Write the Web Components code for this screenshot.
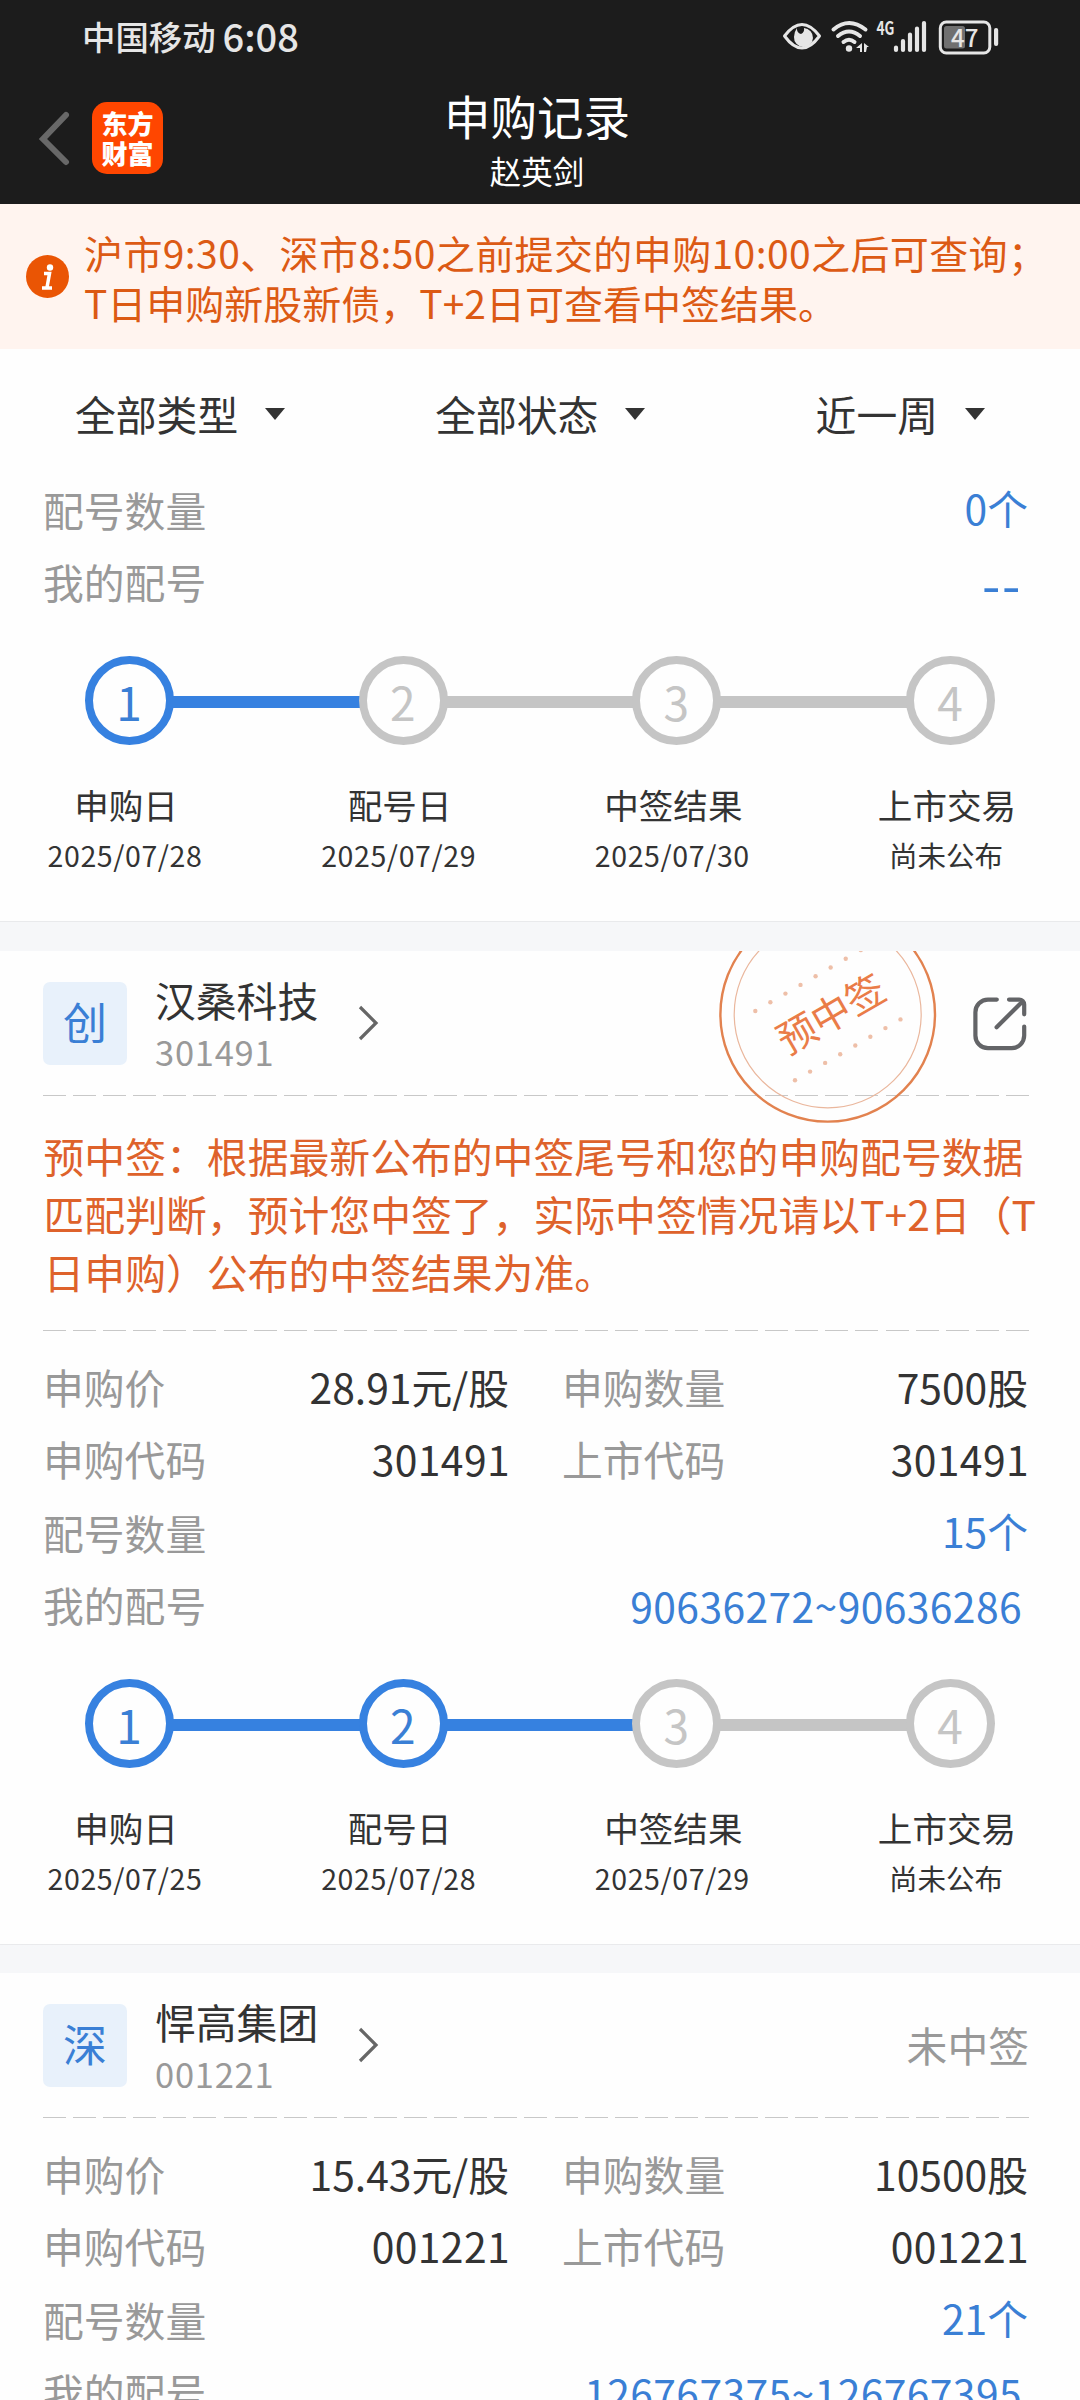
<!DOCTYPE html>
<html lang="zh-CN">
<head>
<meta charset="utf-8">
<title>申购记录</title>
<style>
	html, body {
		margin: 0;
		padding: 0;
	}
	body {
		width: 1080px;
		height: 2400px;
		overflow: hidden;
		background: #fefefe;
		color: #333;
		font-family: "Noto Sans CJK SC", sans-serif;
		font-size: 40.8px;
		line-height: 1;
	}
	.loose {
		letter-spacing: 0.4px;
	}
</style>
</head>
<body>
<status-bar carrier="中国移动" time="6:08" battery="47"></status-bar>
<nav-bar><span slot="title">申购记录</span><span slot="subtitle">赵英剑</span></nav-bar>
<notice-bar><span class="loose">沪市9:30、深市8:50之前提交的申购10:00之后可查询；</span><br>T日申购新股新债，T+2日可查看中签结果。</notice-bar>
<filter-bar>
	<filter-item>全部类型</filter-item>
	<filter-item>全部状态</filter-item>
	<filter-item style="margin-left: auto">近一周</filter-item>
</filter-bar>

<ipo-card>
	<data-row slot="wide" label="配号数量" link>0个</data-row>
	<data-row slot="wide" label="我的配号" link empty>--</data-row>
	<step-progress slot="steps" current="1" dates="2025/07/28,2025/07/29,2025/07/30,尚未公布"></step-progress>
</ipo-card>
<section-gap></section-gap>

<ipo-card>
	<stock-header slot="header" market="创" name="汉桑科技" code="301491">
		<result-stamp>预中签</result-stamp>
		<share-icon></share-icon>
	</stock-header>
	<stock-tip slot="header">预中签：根据最新公布的中签尾号和您的申购配号数据<br>匹配判断，预计您中签了，实际中签情况请以T+2日（T<br>日申购）公布的中签结果为准。</stock-tip>
	<data-row label="申购价">28.91元/股</data-row>
	<data-row label="申购数量">7500股</data-row>
	<data-row label="申购代码" number>301491</data-row>
	<data-row label="上市代码" number>301491</data-row>
	<data-row slot="wide" label="配号数量" link>15个</data-row>
	<data-row slot="wide" label="我的配号" link number>90636272~90636286</data-row>
	<step-progress slot="steps" current="2" dates="2025/07/25,2025/07/28,2025/07/29,尚未公布"></step-progress>
</ipo-card>
<section-gap style="height: 29px"></section-gap>

<ipo-card>
	<stock-header slot="header" market="深" name="悍高集团" code="001221">未中签</stock-header>
	<data-row label="申购价">15.43元/股</data-row>
	<data-row label="申购数量">10500股</data-row>
	<data-row label="申购代码" number>001221</data-row>
	<data-row label="上市代码" number>001221</data-row>
	<data-row slot="wide" label="配号数量" link>21个</data-row>
	<data-row slot="wide" label="我的配号" link number>126767375~126767395</data-row>
</ipo-card>

<script>
// 33 dashes of 23px over the 986px content width
const dashedLine = `
	.dashed {
		height: 1px;
		margin: 0 51px 0 43px;
		background: repeating-linear-gradient(90deg, #c8c8c8 0 23px, transparent 23px 30.09px);
	}
`

class BaseElement extends HTMLElement {
	constructor() {
		super()
		this._shadowRoot = this.attachShadow({ mode: 'open' })
	}
	connectedCallback() {
		this._shadowRoot.innerHTML = this.template()
	}
}

class StatusBar extends BaseElement {
	template() {
		return `
			<style>
				:host {
					display: flex;
					align-items: center;
					box-sizing: border-box;
					height: 72px;
					padding: 0 80px 0 82px;
					background: #1c1c1c;
					color: #e6e6e6;
				}
				.carrier {
					font-size: 33.4px;
					font-weight: 500;
				}
				.time {
					margin-left: 7px;
					font-size: 38px;
					font-weight: 500;
				}
				svg {
					display: block;
					margin-left: auto;
				}
			</style>
			<span class="carrier">${this.getAttribute('carrier')}</span>
			<span class="time">${this.getAttribute('time')}</span>
			<svg width="220" height="72" viewBox="780 0 220 72" fill="none" stroke="#e6e6e6" stroke-linecap="round">
				<path d="M784.5 36Q802 13 819.500 36Q802 60 784.500 36Z" stroke-width="3" stroke-linejoin="round"/>
				<path d="M797 28a5.500 5.500 0 0 0 4 6a5.500 5.500 0 0 0 3-6a9.500 9.500 0 1 1-10 9q0-5 3-9z" fill="#e6e6e6" stroke="none"/>
				<path d="M833.500 29.500q15.500-13 32 0M838 36q11-9 22 0M843.500 42q5.500-4.500 11 0" stroke-width="4"/>
				<circle cx="849" cy="48.500" r="3.200" fill="#e6e6e6" stroke="none"/>
				<path d="M856 48l6-5v9h-2v-4zM864 43l5 4h-2l-1 5h-2z" fill="#e6e6e6" stroke="none"/>
				<text x="876.500" y="34.500" font-size="18.500" font-weight="700" fill="#e6e6e6" stroke="none" textLength="18" lengthAdjust="spacingAndGlyphs">4G</text>
				<path d="M896 47.500v2.500M903 41v9M910 34.500v15.500M917 28.500v21.500M924 23v27" stroke-width="4.200"/>
				<rect x="940.300" y="22" width="49.500" height="31" rx="6" stroke-width="3"/>
				<rect x="944" y="26" width="21" height="22.500" rx="2.500" fill="#707070" stroke="none"/>
				<rect x="994" y="28" width="4.200" height="18" rx="2" fill="#e6e6e6" stroke="none"/>
				<text x="951" y="46.500" font-size="24" font-weight="500" fill="#e6e6e6" stroke="none">${this.getAttribute('battery')}</text>
			</svg>
		`
	}
}

class NavBar extends BaseElement {
	template() {
		return `
			<style>
				:host {
					display: grid;
					grid-template-columns: 1fr auto 1fr;
					height: 132px;
					padding-right: 6px;
					background: #1c1c1c;
					color: #fff;
				}
				.left {
					display: flex;
					align-items: center;
					height: 132px;
					padding: 0 0 0 38px;
				}
				.logo {
					display: grid;
					place-content: center;
					width: 71px;
					height: 72px;
					margin: 0 0 0 21px;
					border-radius: 15px;
					background: #ff4600;
					font-size: 26px;
					font-weight: 900;
					line-height: 30px;
					text-align: center;
				}
				.titles {
					display: flex;
					flex-direction: column;
					align-items: center;
					padding-top: 15px;
				}
				.title {
					font-size: 46.500px;
					line-height: 56px;
				}
				.subtitle {
					font-size: 31.500px;
					line-height: 54px;
				}
			</style>
			<div class="left">
				<svg width="33" height="56" viewBox="0 0 33 56"><path d="M28 5L5 29L28 52" fill="none" stroke="#686868" stroke-width="6" stroke-linecap="round" stroke-linejoin="miter"/></svg>
				<div class="logo">东方<br>财富</div>
			</div>
			<div class="titles">
				<div class="title"><slot name="title"></slot></div>
				<div class="subtitle"><slot name="subtitle"></slot></div>
			</div>
		`
	}
}

class NoticeBar extends BaseElement {
	template() {
		return `
			<style>
				:host {
					display: flex;
					align-items: center;
					box-sizing: border-box;
					height: 145px;
					padding: 0 0 0 26px;
					background: #fff4ef;
					color: #dc5a14;
					font-size: 39px;
					line-height: 50px;
					white-space: nowrap;
				}
				svg {
					flex: none;
					margin-right: 15px;
				}
			</style>
			<svg width="43" height="43" viewBox="0 0 43 43">
				<circle cx="21.500" cy="21.500" r="21.500" fill="#ea5504"/>
				<circle cx="24" cy="12.500" r="3.200" fill="#fff"/>
				<path d="M18 18.500h5.500l-2.500 14M16 33h10" fill="none" stroke="#fff" stroke-width="3.500"/>
			</svg>
			<div class="text"><slot></slot></div>
		`
	}
}

class FilterBar extends BaseElement {
	template() {
		return `
			<style>
				:host {
					display: flex;
					gap: 150px;
					box-sizing: border-box;
					height: 125px;
					padding: 35px 95px 0 75px;
				}
			</style>
			<slot></slot>
		`
	}
}

class FilterItem extends BaseElement {
	template() {
		return `
			<style>
				:host {
					display: flex;
					align-items: center;
					height: 60px;
				}
				.arrow {
					margin: 0 0 1px 27px;
					border: 10px solid transparent;
					border-top: 12px solid #333;
					border-bottom: 0;
				}
			</style>
			<slot></slot>
			<span class="arrow"></span>
		`
	}
}

class IpoCard extends BaseElement {
	template() {
		return `
			<style>
				:host {
					display: block;
				}
				.pairs {
					display: grid;
					grid-template-columns: 1fr 1fr;
					column-gap: 52px;
					margin: 0 51px 2px 43px;
				}
				.pairs.has-header {
					padding-top: 20px;
				}
				.pairs.empty {
					display: none;
				}
				.wide {
					margin: 0 51px 0 43px;
				}
			</style>
			<slot name="header"></slot>
			<div class="pairs ${this.querySelector('data-row:not([slot])') ? 'has-header' : 'empty'}"><slot></slot></div>
			<div class="wide"><slot name="wide"></slot></div>
			<slot name="steps"></slot>
		`
	}
}

class StockHeader extends BaseElement {
	template() {
		return `
			<style>
				${dashedLine}
				:host {
					display: block;
				}
				.bar {
					position: relative;
					display: flex;
					align-items: center;
					box-sizing: border-box;
					height: 144px;
					padding: 0 51px 0 43px;
				}
				.market {
					flex: none;
					width: 84px;
					height: 83px;
					border-radius: 7px;
					background: #e8f1fb;
					color: #3a7fd5;
					font-size: 44px;
					line-height: 79px;
					text-align: center;
				}
				.info {
					margin-left: 28px;
					padding-top: 5px;
				}
				.name {
					line-height: 52px;
				}
				.code {
					color: #999;
					font-size: 34.500px;
					line-height: 51px;
					letter-spacing: 0.75px;
				}
				.chevron {
					margin: 0 0 0 38px;
				}
				.result {
					display: flex;
					margin: 1px 0 0 auto;
					color: #999;
				}
			</style>
			<div class="bar">
				<div class="market">${this.getAttribute('market')}</div>
				<div class="info">
					<div class="name">${this.getAttribute('name')}</div>
					<div class="code">${this.getAttribute('code')}</div>
				</div>
				<svg class="chevron" width="24" height="36" viewBox="0 0 24 36"><path d="M4 2L20 18L4 34" fill="none" stroke="#666" stroke-width="3.200"/></svg>
				<div class="result"><slot></slot></div>
			</div>
			<div class="dashed"></div>
		`
	}
}

class StockTip extends BaseElement {
	template() {
		return `
			<style>
				${dashedLine}
				:host {
					display: block;
				}
				.text {
					padding: 31px 0 29px 43.500px;
					color: #de622b;
					font-size: 40.850px;
					line-height: 58px;
					white-space: nowrap;
				}
			</style>
			<div class="text"><slot></slot></div>
			<div class="dashed"></div>
		`
	}
}

class ResultStamp extends BaseElement {
	dots(x, y) {
		return Array.from({ length: 8 }, (_, i) =>
			`<circle cx="${x + i * 15.07}" cy="${y - i * 8.7}" r="2.200"/>`).join('')
	}
	template() {
		// overlaps the divider below, cut off by the top of the card
		return `
			<style>
				:host {
					position: absolute;
					left: 717px;
					top: 0;
					width: 222px;
					height: 174px;
				}
				svg {
					display: block;
				}
			</style>
			<svg width="222" height="174" viewBox="0 0 222 174">
				<circle cx="110.700" cy="63.300" r="107.300" fill="none" stroke="#e2824f" stroke-width="2.400"/>
				<circle cx="110.700" cy="63.300" r="93.500" fill="none" stroke="#eab79d" stroke-width="1.200"/>
				<g fill="#eebfa8">${this.dots(38.300, 60)}${this.dots(78, 129.300)}</g>
				<text transform="translate(114 63) rotate(-30)" y="14.500" text-anchor="middle" font-size="39" fill="#ea7c48">${this.textContent}</text>
			</svg>
		`
	}
}

class ShareIcon extends BaseElement {
	template() {
		return `
			<style>
				:host {
					display: block;
					height: 54px;
					margin-right: 2px;
				}
				svg {
					display: block;
				}
			</style>
			<svg width="54" height="54" viewBox="0 0 54 54" fill="none" stroke="#636467" stroke-width="4.200" stroke-linecap="round" stroke-linejoin="round">
				<path d="M23.800 2.600H15A12.600 12.600 0 0 0 2.400 15.200V38.500A12.600 12.600 0 0 0 15 51.200H38.500A12.600 12.600 0 0 0 51.200 38.500V29.500"/>
				<path d="M36 2.600H46.200A5 5 0 0 1 51.200 7.600V17.300M49.500 4.500L23.600 30.200"/>
			</svg>
		`
	}
}

class DataRow extends BaseElement {
	template() {
		return `
			<style>
				:host {
					display: flex;
					justify-content: space-between;
					height: 72px;
					line-height: 72px;
				}
				.label {
					color: #999;
				}
				.value {
					padding-right: 1px;
				}
				:host([link]) .value {
					color: #3a7fd5;
					line-height: 68px;
				}
				:host([number]) .value {
					padding-right: 0;
					letter-spacing: 0.4px;
				}
				:host([link][number]) .value {
					padding-right: 7px;
					line-height: 73px;
				}
				:host([empty]) .value {
					padding-right: 7px;
					font-size: 53px;
					letter-spacing: 1.600px;
					line-height: 72px;
				}
			</style>
			<span class="label">${this.getAttribute('label')}</span>
			<span class="value"><slot></slot></span>
		`
	}
}

class StepProgress extends BaseElement {
	template() {
		const current = Number(this.getAttribute('current'))
		const dates = this.getAttribute('dates').split(',')
		const names = ['申购日', '配号日', '中签结果', '上市交易']
		const htmlArr = []
		names.forEach((name, i) => {
			if (i > 0) {
				htmlArr.push(`<span class="line ${i <= current ? 'on' : ''}"></span>`)
			}
			htmlArr.push(`<span class="dot ${i < current ? 'on' : ''}">${i + 1}</span>`)
		})
		return `
			<style>
				:host {
					display: block;
					padding: 38px 0 42px;
				}
				.track {
					display: flex;
					align-items: center;
					margin: 0 85px;
				}
				.dot {
					flex: none;
					box-sizing: border-box;
					width: 89px;
					height: 89px;
					padding-right: 1px;
					border: 8.500px solid #c5c5c5;
					border-radius: 50%;
					color: #c5c5c5;
					font-size: 46px;
					line-height: 75px;
					text-align: center;
				}
				.line {
					flex: 1;
					height: 12px;
					margin: 3px -1px 0;
					background: #c5c5c5;
				}
				.line.on {
					background: #3681e0;
				}
				.dot.on {
					border-color: #3681e0;
					color: #3a7fd5;
				}
				.names {
					display: flex;
					justify-content: space-between;
					margin: 34px 43px 0 36px;
				}
				.item {
					width: 180px;
					font-size: 34.600px;
					line-height: 50px;
					text-align: center;
				}
				.date {
					padding: 1px 2px 0 0;
					margin-bottom: -1px;
					font-size: 28.500px;
					letter-spacing: 0.600px;
				}
				.date.text {
					letter-spacing: 0;
				}
			</style>
			<div class="track">${htmlArr.join('')}</div>
			<div class="names">
				${names.map((name, i) => `
					<div class="item">
						<div>${name}</div>
						<div class="date ${dates[i].includes('/') ? '' : 'text'}">${dates[i]}</div>
					</div>
				`).join('')}
			</div>
		`
	}
}

class SectionGap extends BaseElement {
	template() {
		return `
			<style>
				:host {
					display: block;
					box-sizing: border-box;
					height: 30px;
					border-top: 1px solid #e9eaec;
					background: #f6f7f9;
				}
			</style>
		`
	}
}

window.customElements.define('status-bar', StatusBar)
window.customElements.define('nav-bar', NavBar)
window.customElements.define('notice-bar', NoticeBar)
window.customElements.define('filter-bar', FilterBar)
window.customElements.define('filter-item', FilterItem)
window.customElements.define('ipo-card', IpoCard)
window.customElements.define('stock-header', StockHeader)
window.customElements.define('stock-tip', StockTip)
window.customElements.define('result-stamp', ResultStamp)
window.customElements.define('share-icon', ShareIcon)
window.customElements.define('data-row', DataRow)
window.customElements.define('step-progress', StepProgress)
window.customElements.define('section-gap', SectionGap)
</script>
</body>
</html>
